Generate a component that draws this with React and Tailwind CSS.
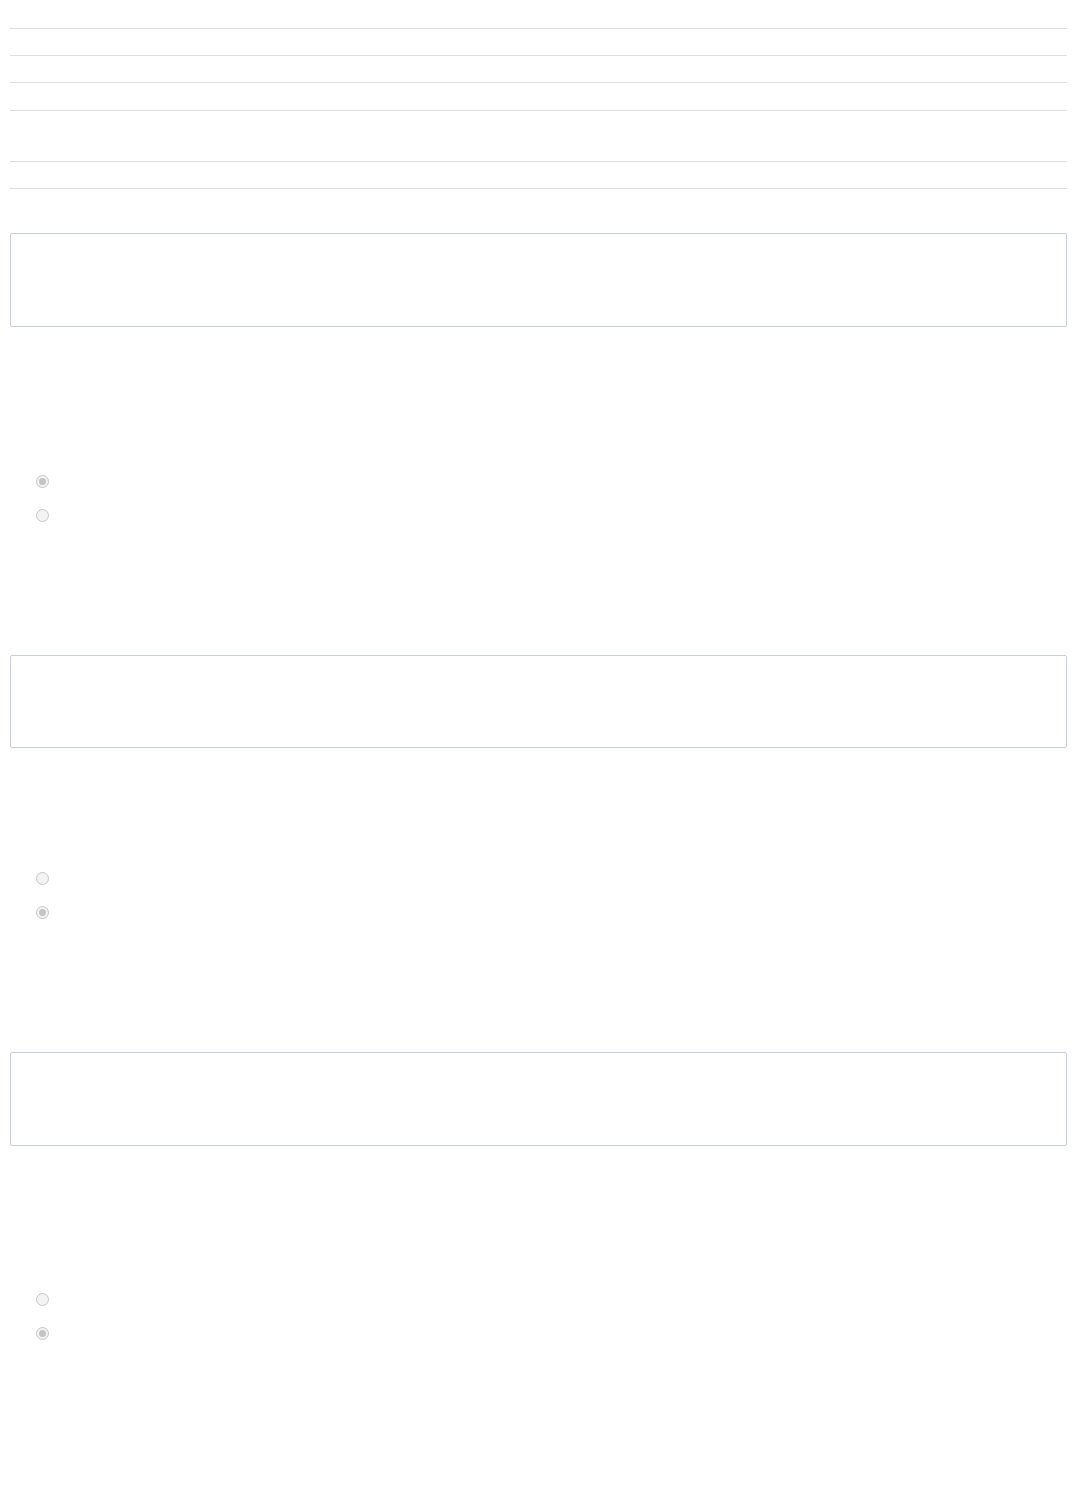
const ROWS = [
  { h: 'h-[27px]' },
  { h: 'h-[27px]' },
  { h: 'h-[28px]' },
  { h: 'h-[51px]' },
  { h: 'h-[27px]' },
]

function Radio({ checked }) {
  return (
    <div className="flex items-center h-[13px] pl-[26px]">
      <span
        className={`w-[13px] h-[13px] rounded-full border border-[#c6c6c6] bg-[#f3f3f3] flex items-center justify-center`}
      >
        {checked && <span className="w-[7px] h-[7px] rounded-full bg-[#c4c4c4]" />}
      </span>
    </div>
  )
}

function Question({ boxH, gapTop, first }) {
  return (
    <div>
      <div className={`${boxH} border border-[#c9ccd9] rounded-[2px] bg-white`} />
      <div className={gapTop}>
        <Radio checked={first} />
        <div className="mt-[21px]">
          <Radio checked={!first} />
        </div>
      </div>
    </div>
  )
}

export default function App() {
  return (
    <div className="min-h-screen bg-white px-[10px] pt-[28px] font-['Liberation_Sans',sans-serif]">
      {/* header rows */}
      <div>
        {ROWS.map((r, i) => (
          <div key={i} className={`${r.h} border-t border-[#dedede]`} />
        ))}
        <div className="border-t border-[#dedede]" />
      </div>

      <div className="mt-[44px]">
        <Question boxH="h-[94px]" gapTop="mt-[148px]" first />
      </div>
      <div className="mt-[133px]">
        <Question boxH="h-[93px]" gapTop="mt-[124px]" first={false} />
      </div>
      <div className="mt-[133px]">
        <Question boxH="h-[94px]" gapTop="mt-[147px]" first={false} />
      </div>
      <div className="h-[150px]" />
    </div>
  )
}
